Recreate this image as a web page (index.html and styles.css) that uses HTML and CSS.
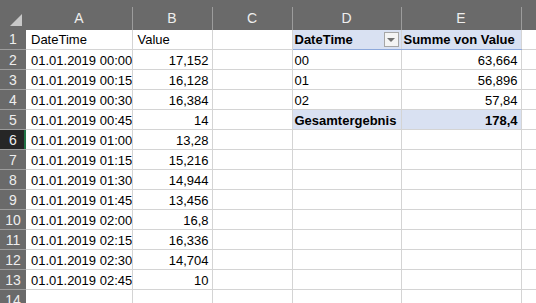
FILE: index.html
```html
<!DOCTYPE html>
<html lang="de">
<head>
    <meta charset="UTF-8">
    <title>Mappe1 - Excel</title>
    <link rel="stylesheet" href="styles.css">
</head>
<body>
    <table class="sheet">
        <colgroup>
            <col class="col-head">
            <col class="col-a">
            <col class="col-b">
            <col class="col-c">
            <col class="col-d">
            <col class="col-e">
            <col>
        </colgroup>
        <thead>
            <tr class="col-letters">
                <th class="corner"><span class="tri"></span></th>
                <th>A</th>
                <th>B</th>
                <th>C</th>
                <th>D</th>
                <th>E</th>
                <th></th>
            </tr>
        </thead>
        <tbody>
            <tr>
                <th>1</th>
                <td>DateTime</td>
                <td>Value</td>
                <td></td>
                <td class="pv-head">
                    <div class="pv-label">DateTime <span class="filter-btn"><span class="arrow"></span></span></div>
                </td>
                <td class="pv-head">Summe von Value</td>
                <td></td>
            </tr>
            <tr>
                <th>2</th>
                <td>01.01.2019 00:00</td>
                <td class="num">17,152</td>
                <td></td>
                <td class="pv-row">00</td>
                <td class="pv-row num">63,664</td>
                <td></td>
            </tr>
            <tr>
                <th>3</th>
                <td>01.01.2019 00:15</td>
                <td class="num">16,128</td>
                <td></td>
                <td class="pv-row">01</td>
                <td class="pv-row num">56,896</td>
                <td></td>
            </tr>
            <tr>
                <th>4</th>
                <td>01.01.2019 00:30</td>
                <td class="num">16,384</td>
                <td></td>
                <td class="pv-row">02</td>
                <td class="pv-row num">57,84</td>
                <td></td>
            </tr>
            <tr>
                <th>5</th>
                <td>01.01.2019 00:45</td>
                <td class="num">14</td>
                <td></td>
                <td class="pv-total">Gesamtergebnis</td>
                <td class="pv-total num">178,4</td>
                <td></td>
            </tr>
            <tr class="active">
                <th>6</th>
                <td>01.01.2019 01:00</td>
                <td class="num">13,28</td>
                <td></td><td></td><td></td><td></td>
            </tr>
            <tr>
                <th>7</th>
                <td>01.01.2019 01:15</td>
                <td class="num">15,216</td>
                <td></td><td></td><td></td><td></td>
            </tr>
            <tr>
                <th>8</th>
                <td>01.01.2019 01:30</td>
                <td class="num">14,944</td>
                <td></td><td></td><td></td><td></td>
            </tr>
            <tr>
                <th>9</th>
                <td>01.01.2019 01:45</td>
                <td class="num">13,456</td>
                <td></td><td></td><td></td><td></td>
            </tr>
            <tr>
                <th>10</th>
                <td>01.01.2019 02:00</td>
                <td class="num">16,8</td>
                <td></td><td></td><td></td><td></td>
            </tr>
            <tr>
                <th>11</th>
                <td>01.01.2019 02:15</td>
                <td class="num">16,336</td>
                <td></td><td></td><td></td><td></td>
            </tr>
            <tr>
                <th>12</th>
                <td>01.01.2019 02:30</td>
                <td class="num">14,704</td>
                <td></td><td></td><td></td><td></td>
            </tr>
            <tr>
                <th>13</th>
                <td>01.01.2019 02:45</td>
                <td class="num">10</td>
                <td></td><td></td><td></td><td></td>
            </tr>
            <tr>
                <th>14</th>
                <td></td><td></td><td></td><td></td><td></td><td></td>
            </tr>
        </tbody>
    </table>
</body>
</html>
```

FILE: styles.css
```css
* {
    margin: 0;
    padding: 0;
    box-sizing: border-box;
}

body {
    width: 536px;
    height: 303px;
    overflow: hidden;
    background: white;
    font-family: 'Liberation Sans', Arial, sans-serif;
    font-size: 13px;
    color: #000;
}

.sheet {
    border-collapse: collapse;
    table-layout: fixed;
    width: 560px;
}

.col-head { width: 26px; }
.col-a { width: 106px; }
.col-b { width: 80px; }
.col-c { width: 80px; }
.col-d { width: 109px; }
.col-e { width: 120px; }

/* column letters */
.col-letters th {
    height: 26px;
    background: #6a6a6a;
    color: #eeeeee;
    font-weight: normal;
    font-size: 14px;
    padding-top: 7px;
    text-align: center;
    border-right: 1px solid #9c9c9c;
    border-top: 7px solid #6a6a6a;
    padding-top: 0;
}

.col-letters th.corner {
    position: relative;
    border-right: 1px solid #6a6a6a;
}

.tri {
    position: absolute;
    right: 4px;
    bottom: 4px;
    width: 0;
    height: 0;
    border-left: 12px solid transparent;
    border-bottom: 12px solid #c8c8c8;
}

/* row numbers */
tbody th {
    height: 20px;
    background: #6a6a6a;
    color: #eeeeee;
    font-weight: normal;
    font-size: 14px;
    text-align: center;
    border-bottom: 1px solid #9c9c9c;
}

tr.active th {
    background: #262626;
    box-shadow: inset -2px 0 0 #217346;
}

td {
    height: 20px;
    padding: 1px 4px 0 5px;
    border-right: 1px solid #d4d4d4;
    border-bottom: 1px solid #d4d4d4;
    white-space: nowrap;
    overflow: hidden;
    vertical-align: middle;
}

td.num {
    text-align: right;
    padding-right: 3px;
}

/* pivot table */
.pv-head {
    background: #d9e1f2;
    font-weight: bold;
    border-bottom: 1px solid #8ea9db;
    padding-left: 2px;
}

.pv-label {
    display: flex;
    align-items: center;
    justify-content: space-between;
}

.filter-btn {
    width: 15px;
    height: 15px;
    border: 1px solid #a6a6a6;
    background: #f4f4f4;
    display: flex;
    align-items: center;
    justify-content: center;
    margin-right: -2px;
}

.arrow {
    width: 0;
    height: 0;
    border-left: 4px solid transparent;
    border-right: 4px solid transparent;
    border-top: 4px solid #707070;
}

.pv-row {
    padding-left: 2px;
}

.pv-total {
    background: #d9e1f2;
    font-weight: bold;
    border-top: 1px solid #8ea9db;
    padding-left: 2px;
}
```
